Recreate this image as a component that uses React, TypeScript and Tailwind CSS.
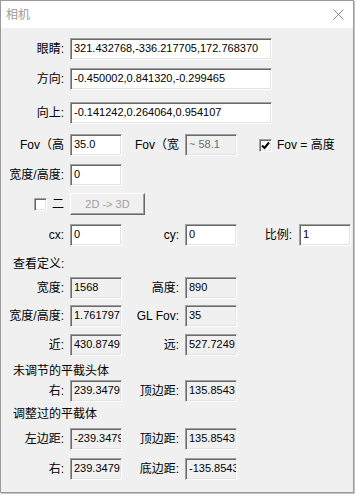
import React from 'react';

type FieldKind = 'edit' | 'readonly' | 'disabled';

interface FieldProps {
  value: string;
  width: string;
  kind?: FieldKind;
  className?: string;
}

const sunken =
  'border border-t-[#a0a0a0] border-l-[#a0a0a0] border-b-white border-r-white shadow-[inset_1px_1px_0_#696969,inset_-1px_-1px_0_#e3e3e3]';

const Field: React.FC<FieldProps> = ({ value, width, kind = 'edit', className = '' }) => {
  const bg = kind === 'edit' ? 'bg-white text-black' : 'bg-[#f0f0f0]';
  const color = kind === 'disabled' ? 'text-[#6d6d6d]' : 'text-black';
  return (
    <div
      className={`${width} h-[22px] ${sunken} ${bg} ${color} overflow-hidden whitespace-nowrap pl-[3px] pt-[2px] text-[11px] leading-[15px] ${className}`}
      style={{ fontFamily: '"Liberation Sans", Arial, sans-serif' }}
    >
      {value}
    </div>
  );
};

const Label: React.FC<{ text: string; width: string }> = ({ text, width }) => (
  <div className={`${width} shrink-0 text-right whitespace-nowrap text-[12px] leading-[16px] text-black`}>{text}</div>
);

const CheckBox: React.FC<{ checked?: boolean }> = ({ checked }) => (
  <div className={`w-[13px] h-[13px] shrink-0 bg-white ${sunken} flex items-center justify-center`}>
    {checked && (
      <svg width="9" height="9" viewBox="0 0 9 9">
        <path d="M1 4.5 L3.5 7 L8 1.5" fill="none" stroke="#000" strokeWidth="2" />
      </svg>
    )}
  </div>
);

const Row: React.FC<{ mt: string; children: React.ReactNode }> = ({ mt, children }) => (
  <div className={`flex items-center h-[22px] ${mt}`}>{children}</div>
);

const Section: React.FC<{ mt: string; text: string }> = ({ mt, text }) => (
  <div className={`h-[16px] pl-[12px] text-[12px] leading-[16px] text-black ${mt}`}>{text}</div>
);

export default function App() {
  return (
    <div
      className="w-[356px] h-[495px] bg-white overflow-hidden"
      style={{ fontFamily: '"Liberation Sans", "Noto Sans CJK SC", sans-serif' }}
    >
      <div className="w-[354px] h-[493px] border border-[#9a9a9a] shadow-[1px_1px_0_#c4c4c4] flex flex-col">
        {/* title bar */}
        <div className="h-[27px] bg-white flex items-center justify-between pl-[5px] pr-[9px] shrink-0">
          <span className="text-[12px] text-[#9b9b9b]">相机</span>
          <svg width="11" height="11" viewBox="0 0 11 11">
            <path d="M0.5 0.5 L10.5 10.5 M10.5 0.5 L0.5 10.5" stroke="#8a8a8a" strokeWidth="1" />
          </svg>
        </div>

        <div className="flex-1 bg-[#f0f0f0] flex flex-col">
          <Row mt="mt-[10px]">
            <Label text="眼睛:" width="w-[63px]" />
            <Field value="321.432768,-336.217705,172.768370" width="w-[202px]" className="ml-[6px]" />
          </Row>
          <Row mt="mt-[8px]">
            <Label text="方向:" width="w-[63px]" />
            <Field value="-0.450002,0.841320,-0.299465" width="w-[202px]" className="ml-[6px]" />
          </Row>
          <Row mt="mt-[12px]">
            <Label text="向上:" width="w-[63px]" />
            <Field value="-0.141242,0.264064,0.954107" width="w-[202px]" className="ml-[6px]" />
          </Row>

          <Row mt="mt-[10px]">
            <Label text="Fov（高" width="w-[63px]" />
            <Field value="35.0" width="w-[52px]" className="ml-[6px]" />
            <Label text="Fov（宽" width="w-[57px]" />
            <Field value="~ 58.1" width="w-[52px]" kind="disabled" className="ml-[6px]" />
            <div className="ml-[22px] flex items-center gap-[5px]">
              <CheckBox checked />
              <span className="text-[12px] leading-[16px] whitespace-nowrap">Fov = 高度</span>
            </div>
          </Row>
          <Row mt="mt-[8px]">
            <Label text="宽度/高度:" width="w-[63px]" />
            <Field value="0" width="w-[52px]" className="ml-[6px]" />
          </Row>
          <Row mt="mt-[7px]">
            <div className="w-[63px] flex items-center justify-end gap-[5px] shrink-0">
              <CheckBox />
              <span className="text-[12px] leading-[16px]">二</span>
            </div>
            <button className="ml-[6px] w-[75px] h-[22px] bg-[#f0f0f0] border border-t-white border-l-white border-b-[#696969] border-r-[#696969] shadow-[inset_-1px_-1px_0_#a0a0a0] text-[11px] text-[#a0a0a0]">
              2D -&gt; 3D
            </button>
          </Row>
          <Row mt="mt-[9px]">
            <Label text="cx:" width="w-[63px]" />
            <Field value="0" width="w-[52px]" className="ml-[6px]" />
            <Label text="cy:" width="w-[57px]" />
            <Field value="0" width="w-[52px]" className="ml-[6px]" />
            <Label text="比例:" width="w-[55px]" />
            <Field value="1" width="w-[52px]" className="ml-[7px]" />
          </Row>

          <Section mt="mt-[10px]" text="查看定义:" />
          <Row mt="mt-[5px]">
            <Label text="宽度:" width="w-[63px]" />
            <Field value="1568" width="w-[52px]" kind="readonly" className="ml-[6px]" />
            <Label text="高度:" width="w-[57px]" />
            <Field value="890" width="w-[52px]" kind="readonly" className="ml-[6px]" />
          </Row>
          <Row mt="mt-[6px]">
            <Label text="宽度/高度:" width="w-[63px]" />
            <Field value="1.761797" width="w-[52px]" kind="readonly" className="ml-[6px]" />
            <Label text="GL Fov:" width="w-[57px]" />
            <Field value="35" width="w-[52px]" kind="readonly" className="ml-[6px]" />
          </Row>
          <Row mt="mt-[7px]">
            <Label text="近:" width="w-[63px]" />
            <Field value="430.8749" width="w-[52px]" kind="readonly" className="ml-[6px]" />
            <Label text="远:" width="w-[57px]" />
            <Field value="527.7249" width="w-[52px]" kind="readonly" className="ml-[6px]" />
          </Row>

          <Section mt="mt-[7px]" text="未调节的平截头体" />
          <Row mt="mt-[1px]">
            <Label text="右:" width="w-[63px]" />
            <Field value="239.3479" width="w-[52px]" kind="readonly" className="ml-[6px]" />
            <Label text="顶边距:" width="w-[57px]" />
            <Field value="135.8543" width="w-[52px]" kind="readonly" className="ml-[6px]" />
          </Row>
          <Section mt="mt-[4px]" text="调整过的平截体" />
          <Row mt="mt-[6px]">
            <Label text="左边距:" width="w-[63px]" />
            <Field value="-239.3479" width="w-[52px]" kind="readonly" className="ml-[6px]" />
            <Label text="顶边距:" width="w-[57px]" />
            <Field value="135.8543" width="w-[52px]" kind="readonly" className="ml-[6px]" />
          </Row>
          <Row mt="mt-[8px]">
            <Label text="右:" width="w-[63px]" />
            <Field value="239.3479" width="w-[52px]" kind="readonly" className="ml-[6px]" />
            <Label text="底边距:" width="w-[57px]" />
            <Field value="-135.8543" width="w-[52px]" kind="readonly" className="ml-[6px]" />
          </Row>
        </div>
      </div>
    </div>
  );
}
